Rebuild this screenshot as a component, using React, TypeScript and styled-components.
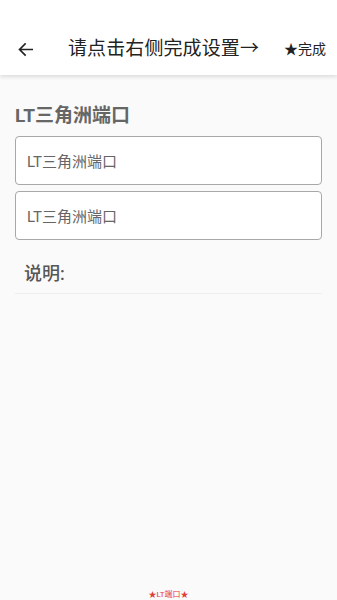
import React from "react";
import styled, { createGlobalStyle } from "styled-components";

const Global = createGlobalStyle`
  html, body { margin: 0; padding: 0; background: #fafafa; }
  body { font-family: Roboto, "Noto Sans CJK SC", "Noto Sans", sans-serif; }
  * { box-sizing: border-box; }
`;

const Page = styled.div`
  width: 337px;
  height: 600px;
  display: flex;
  flex-direction: column;
  background: #fafafa;
`;

const Header = styled.header`
  height: 75px;
  padding-top: 23px;
  background: #ffffff;
  display: flex;
  align-items: center;
  box-shadow: 0 2px 4px rgba(0, 0, 0, 0.12);
  position: relative;
  z-index: 1;
`;

const BackButton = styled.div`
  width: 52px;
  display: flex;
  justify-content: center;
  padding-right: 1px;
  color: #222;
`;

const Title = styled.div`
  flex: 1;
  font-size: 19px;
  line-height: 24px;
  font-weight: 400;
  color: #222;
  padding-left: 16px;
  letter-spacing: 0.1px;
`;

const Action = styled.div`
  font-size: 14px;
  line-height: 18px;
  color: #222;
  padding-right: 11px;
`;

const Body = styled.main`
  flex: 1;
  padding: 28px 15px 0 15px;
  display: flex;
  flex-direction: column;
`;

const Label = styled.div`
  font-size: 19px;
  font-weight: 700;
  color: #666;
  line-height: 26px;
  margin-bottom: 7px;
`;

const Field = styled.div`
  height: 49px;
  border: 1px solid #a8a8a8;
  border-radius: 4px;
  background: #fff;
  display: flex;
  align-items: center;
  padding-left: 11px;
  font-size: 15px;
  color: #666;
  margin-bottom: 6px;
`;

const Note = styled.div`
  margin-top: 14px;
  padding: 0 9px 5px;
  font-size: 18px;
  font-weight: 500;
  color: #555;
  line-height: 28px;
  border-bottom: 1px solid #eeeeee;
`;

const Spacer = styled.div`
  flex: 1;
`;

const Footer = styled.div`
  text-align: center;
  font-size: 8px;
  color: #e53935;
  line-height: 8px;
  padding-bottom: 1px;
`;

function ArrowLeft() {
  return (
    <svg width="19" height="19" viewBox="0 0 24 24" fill="none">
      <path d="M20.5 12H4.5M11.5 5l-7 7 7 7" stroke="#222" strokeWidth="2.1" strokeLinecap="square" />
    </svg>
  );
}

export default function App() {
  return (
    <>
      <Global />
      <Page>
        <Header>
          <BackButton>
            <ArrowLeft />
          </BackButton>
          <Title>请点击右侧完成设置→</Title>
          <Action>★完成</Action>
        </Header>
        <Body>
          <Label>LT三角洲端口</Label>
          <Field>LT三角洲端口</Field>
          <Field>LT三角洲端口</Field>
          <Note>说明:</Note>
          <Spacer />
          <Footer>★LT端口★</Footer>
        </Body>
      </Page>
    </>
  );
}
